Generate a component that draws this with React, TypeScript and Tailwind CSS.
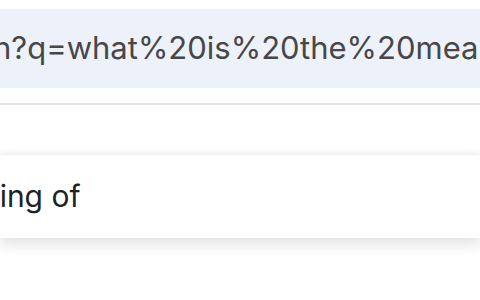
export default function App() {
  return (
    <div className="w-[480px] h-[300px] overflow-hidden bg-white flex flex-col font-['Inter',sans-serif]">
      {/* address bar */}
      <div className="mt-[9px] h-[79px] bg-[#edf2fa] flex items-center overflow-hidden">
        <span className="ml-[-7px] whitespace-nowrap text-[31px] text-[#474747]">
          h?q=what%20is%20the%20meaning%20of
        </span>
      </div>

      {/* divider under toolbar */}
      <div className="mt-[15px] h-[2px] bg-[#e5e5e5]" />

      {/* suggestion dropdown */}
      <div className="mt-[50px] h-[83px] bg-white shadow-[0_6px_14px_rgba(0,0,0,0.12),0_-2px_6px_rgba(0,0,0,0.05)] flex items-center overflow-hidden">
        <span className="ml-[-79px] whitespace-nowrap text-[30px] text-[#202124]">
          meaning of
        </span>
      </div>
    </div>
  )
}
